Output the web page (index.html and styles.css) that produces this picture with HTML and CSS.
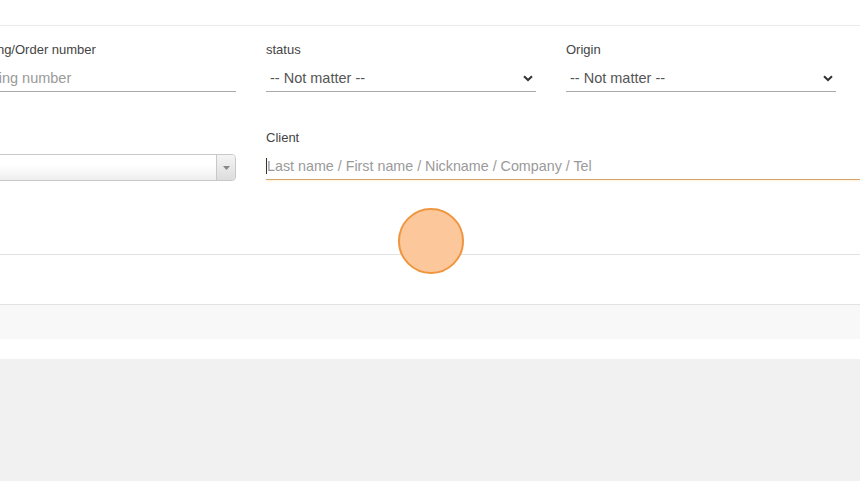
FILE: index.html
```html
<!DOCTYPE html>
<html lang="en">

<head>
    <meta charset="UTF-8">
    <meta name="viewport" content="width=device-width, initial-scale=1.0">
    <title>Order search</title>
    <link rel="stylesheet" href="styles.css">
</head>

<body>
    <div class="topbar"></div>

    <form class="search-form">
        <div class="form-group">
            <label class="form-label">Tracking/Order number</label>
            <div class="form-input text">
                <span class="placeholder">Tracking number</span>
            </div>
        </div>

        <div class="form-group">
            <label class="form-label">status</label>
            <div class="form-input select">
                <span>-- Not matter --</span>
                <svg class="chevron" width="10" height="7" viewBox="0 0 10 7">
                    <path d="M1 1.2 L5 5 L9 1.2" fill="none" stroke="#333" stroke-width="2"/>
                </svg>
            </div>
        </div>

        <div class="form-group">
            <label class="form-label">Origin</label>
            <div class="form-input select">
                <span>-- Not matter --</span>
                <svg class="chevron" width="10" height="7" viewBox="0 0 10 7">
                    <path d="M1 1.2 L5 5 L9 1.2" fill="none" stroke="#333" stroke-width="2"/>
                </svg>
            </div>
        </div>

        <div class="form-group spacer"></div>

        <div class="form-group">
            <label class="form-label">&nbsp;</label>
            <div class="select-box">
                <span class="select-box-text"></span>
                <span class="select-box-arrow">
                    <svg width="7" height="4" viewBox="0 0 7 4">
                        <path d="M0 0 L7 0 L3.5 4 Z" fill="#888"/>
                    </svg>
                </span>
            </div>
        </div>

        <div class="form-group wide">
            <label class="form-label">Client</label>
            <div class="form-input focused">
                <span class="caret"></span>
                <span class="placeholder">Last name / First name / Nickname / Company / Tel</span>
            </div>
        </div>
    </form>

    <div class="actions"></div>
    <div class="results-header"></div>
    <div class="results-gap"></div>
    <div class="page-bg"></div>

    <div class="touch-dot"></div>
</body>

</html>
```

FILE: styles.css
```css
body {
    margin: 0;
    font-family: "Liberation Sans", Arial, sans-serif;
    color: #444;
    background: #fff;
    overflow: hidden;
    height: 481px;
    position: relative;
}

.topbar {
    height: 25px;
    border-bottom: 1px solid #ececec;
}

.search-form {
    display: grid;
    grid-template-columns: 274px repeat(3, 270px);
    column-gap: 30px;
    row-gap: 38px;
    margin-left: -38px;
    padding-top: 16px;
}

.form-group {
    display: flex;
    flex-direction: column;
}

.form-group.wide {
    grid-column: span 3;
}

.form-label {
    font-size: 13px;
    color: #444;
    line-height: 16px;
    height: 16px;
    margin-bottom: 6px;
}

.form-input {
    display: flex;
    align-items: center;
    height: 27px;
    font-size: 14.5px;
    color: #555;
    border-bottom: 1px solid #a9a9a9;
    position: relative;
}

.form-input.text {
    padding-left: 1px;
}

.form-input.select {
    justify-content: space-between;
    padding-left: 4px;
    padding-right: 3px;
}

.placeholder {
    color: #9a9a9a;
}

.chevron {
    margin-top: 1px;
}

.form-input.focused {
    font-size: 14.3px;
    border-bottom-color: #d4a66a;
    box-shadow: 0 1px 2px rgba(240, 190, 110, 0.25);
}

.caret {
    width: 1px;
    height: 16px;
    background: #333;
}

.select-box {
    display: flex;
    height: 25px;
    margin-top: 2px;
    border: 1px solid #c8c8c8;
    border-radius: 4px;
    background: linear-gradient(#fff 40%, #eee);
    overflow: hidden;
}

.select-box-text {
    flex: 1;
}

.select-box-arrow {
    width: 18px;
    display: flex;
    align-items: center;
    justify-content: center;
    border-left: 1px solid #c8c8c8;
    background: linear-gradient(#f4f4f4, #ddd);
}

.actions {
    height: 73px;
    border-bottom: 1px solid #e2e2e2;
}

.results-header {
    height: 49px;
    border-bottom: 1px solid #e2e2e2;
}

.results-gap {
    height: 34px;
    background: #f8f8f8;
}

.page-bg {
    margin-top: 20px;
    height: 130px;
    background: #f1f1f1;
}

.touch-dot {
    position: absolute;
    left: 398px;
    top: 208px;
    width: 62px;
    height: 62px;
    border: 2px solid #f0953f;
    border-radius: 50%;
    background: rgba(252, 198, 152, 0.97);
}
```
